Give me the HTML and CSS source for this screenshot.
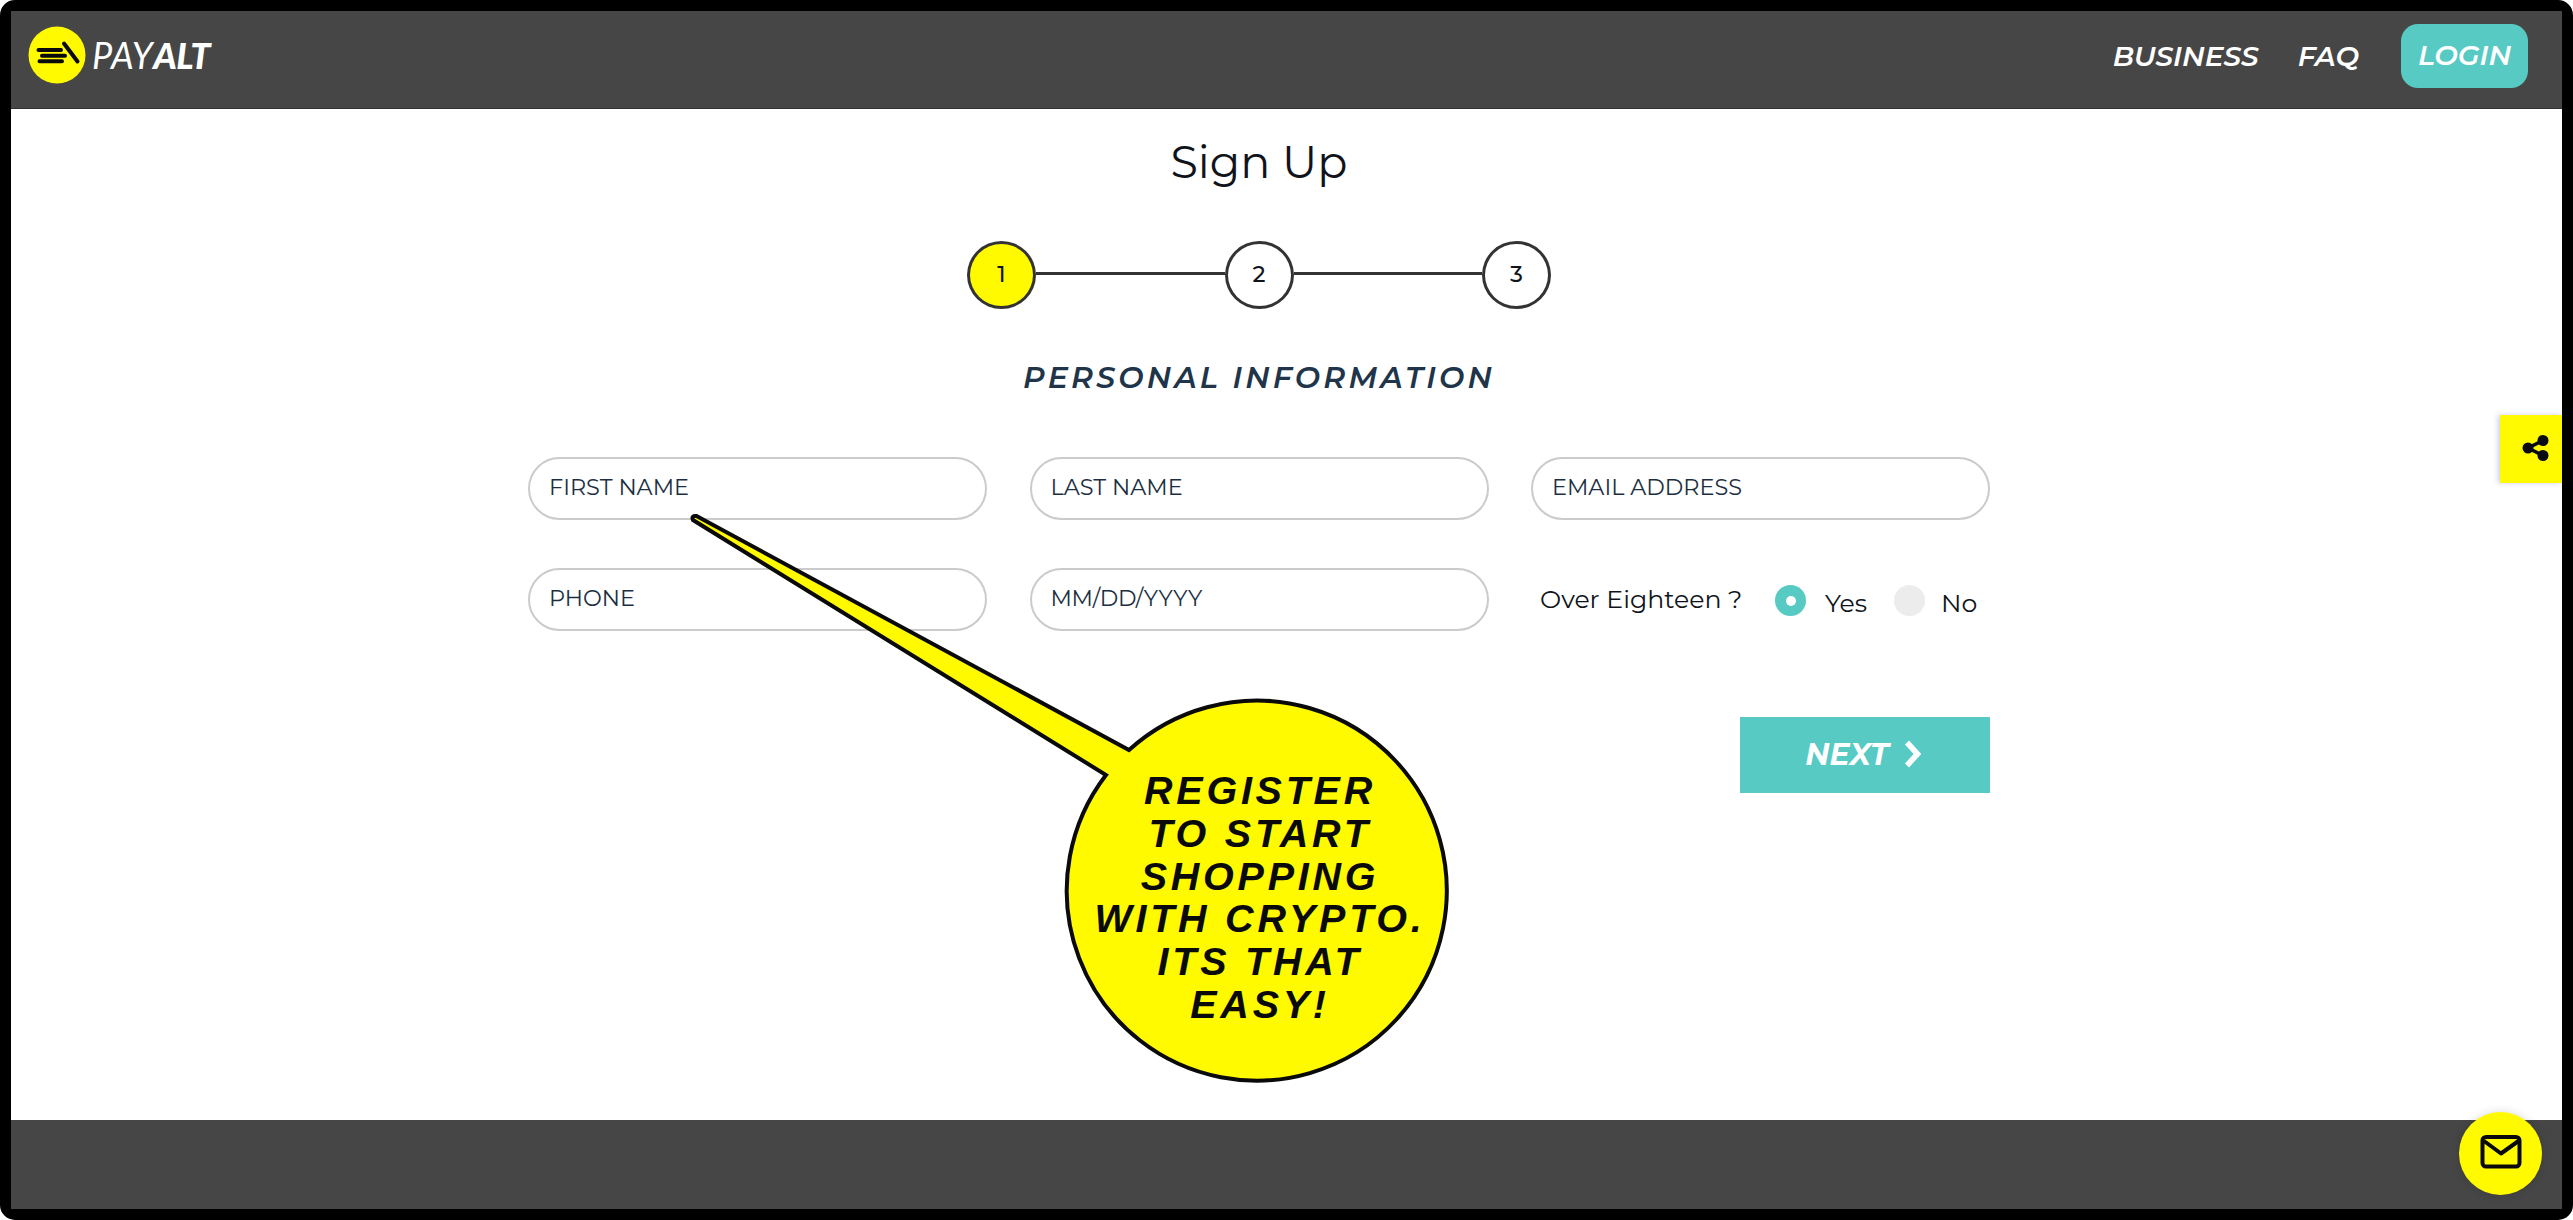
FILE: index.html
```html
<!DOCTYPE html>
<html lang="en">
<head>
<meta charset="utf-8">
<title>PayAlt - Sign Up</title>
<link rel="stylesheet" href="styles.css">
</head>
<body>
<div class="frame">
  <header class="header">
    <a class="brand">
      <svg class="brand-mark" viewBox="0 0 58 58" width="58" height="58">
        <circle cx="29" cy="29" r="28.5" fill="#fffa00"/>
        <g stroke="#0a0a0a" stroke-width="4" stroke-linecap="round">
          <path d="M10.500 24H33M14 29.800H37M11.500 35.300H34M36 17.500L49.500 35.500"/>
        </g>
      </svg>
      <span class="brand-name"><span class="brand-light">PAY</span><span class="brand-bold">ALT</span></span>
    </a>
    <nav class="nav">
      <a>BUSINESS</a>
      <a>FAQ</a>
      <a class="login">LOGIN</a>
    </nav>
  </header>

  <main class="main">
    <h1 class="title">Sign Up</h1>
    <div class="steps">
      <span class="step active">1</span>
      <span class="step-line"></span>
      <span class="step">2</span>
      <span class="step-line"></span>
      <span class="step">3</span>
    </div>
    <h2 class="subtitle">PERSONAL INFORMATION</h2>
    <div class="fields">
      <label class="field">FIRST NAME</label>
      <label class="field">LAST NAME</label>
      <label class="field">EMAIL ADDRESS</label>
      <label class="field">PHONE</label>
      <label class="field date">MM/DD/YYYY</label>
      <div class="age">
        <span class="question">Over Eighteen ?</span>
        <span class="radio checked"></span>
        <span class="option yes">Yes</span>
        <span class="radio"></span>
        <span class="option no">No</span>
      </div>
    </div>
    <button class="next">NEXT
      <svg viewBox="0 0 20 30" width="20" height="30"><path d="M4 3.500L14.500 15L4 26.500" fill="none" stroke="#fff" stroke-width="5.600"/></svg>
    </button>
  </main>

  <footer class="footer"></footer>
</div>

<div class="callout">
  <svg class="callout-shape" viewBox="680 500 780 590" width="780" height="590">
    <path d="M696.500 516L1129 750A190 190 0 1 1 1106 775L693 520Q691 515.500 696.500 516Z" fill="#fffa00" stroke="#0a0a0a" stroke-width="4"/>
  </svg>
  <p class="callout-text">REGISTER<br>TO START<br>SHOPPING<br>WITH CRYPTO.<br>ITS THAT<br>EASY!</p>
</div>

<a class="share">
  <svg viewBox="0 0 30 30" width="30" height="30">
    <path d="M22 7.500L7 15L22 22.500" fill="none" stroke="#0a0a14" stroke-width="3.400"/>
    <g fill="#0a0a14"><circle cx="22" cy="7.500" r="5.500"/><circle cx="7" cy="15" r="5.500"/><circle cx="22" cy="22.500" r="5.500"/></g>
  </svg>
</a>
<a class="mail">
  <svg viewBox="0 0 42 34" width="42" height="34">
    <g fill="none" stroke="#0a0a0a" stroke-width="4" stroke-linejoin="round">
      <rect x="2.500" y="2" width="37" height="29.500" rx="3.500"/>
      <path d="M4 6L21 18.500L38.500 6"/>
    </g>
  </svg>
</a>
</body>
</html>
```
FILE: styles.css
```css
* { box-sizing: border-box; }

html { background: #fff; }

body {
  margin: 0;
  position: relative;
  width: 2573px;
  height: 1220px;
  overflow: hidden;
  font-family: Montserrat, Inter, "Liberation Sans", sans-serif;
  color: #10141a;
}

.frame {
  display: flex;
  flex-direction: column;
  height: 1220px;
  border: 11px solid #000;
  border-radius: 15px;
  background: #fff;
}

.header {
  display: flex;
  justify-content: space-between;
  align-items: flex-start;
  height: 98px;
  padding: 13px 34px 0 17px;
  background: #464646;
  border-bottom: 1px solid #333;
}

.brand { display: flex; align-items: center; gap: 6px; margin-top: 2px; }
.brand-name { font-family: Lato, sans-serif; font-style: italic; font-size: 36px; line-height: 58px; color: #fff; }
.brand-light { font-weight: 400; letter-spacing: 0.5px; }
.brand-bold { font-weight: 900; letter-spacing: -0.6px; }

.nav {
  display: flex;
  align-items: center;
  font-size: 28px;
  font-style: italic;
  font-weight: 600;
  line-height: 62px;
  color: #fff;
}
.nav a + a { margin-left: 39px; }
.nav .login {
  width: 127px;
  height: 64px;
  margin-left: 42px;
  border-radius: 17px;
  background: #56cac3;
  text-align: center;
}

.main {
  flex: 1;
  display: flex;
  flex-direction: column;
  align-items: center;
  width: 1462px;
  margin-left: 517px;
}

.title {
  margin: 23px 0 0;
  font-size: 44.5px;
  font-weight: 400;
  line-height: 60px;
}

.steps { display: flex; align-items: center; margin-top: 49px; }
.step {
  width: 69px;
  height: 68px;
  border: 3px solid #333;
  border-radius: 50%;
  font-size: 22.5px;
  font-weight: 500;
  line-height: 60px;
  text-align: center;
}
.step.active { background: #fffa00; }
.step-line { width: 188.5px; height: 3px; margin-top: -3px; background: #333; }

.subtitle {
  margin: 49px 0 0;
  font-size: 30px;
  font-style: italic;
  font-weight: 600;
  line-height: 40px;
  letter-spacing: 3.2px;
  color: #20344a;
}

.fields {
  display: grid;
  grid-template-columns: repeat(3, 459px);
  gap: 48px 42.5px;
  margin-top: 59px;
}
.field {
  height: 63px;
  padding-left: 19px;
  border: 2px solid #cbcbcb;
  border-radius: 32px;
  font-size: 22.4px;
  line-height: 57px;
  color: #1c2f42;
}
.field.date { letter-spacing: -0.3px; }

.age { display: flex; align-items: center; height: 63px; padding: 2px 0 0 9px; font-size: 25.2px; line-height: 30px; }
.question { width: 235px; margin-top: -4px; white-space: nowrap; }
.radio {
  display: flex;
  align-items: center;
  justify-content: center;
  width: 31px;
  height: 31px;
  border-radius: 50%;
  background: #ececec;
}
.radio.checked { background: #56cac3; }
.radio.checked::after { content: ""; width: 10px; height: 10px; border-radius: 50%; background: #fff; }
.option { margin-top: 4px; }
.yes { width: 69px; margin-left: 19px; }
.no { margin-left: 16px; }

.next {
  display: flex;
  align-items: center;
  justify-content: center;
  gap: 14px;
  align-self: flex-end;
  width: 250px;
  height: 76px;
  margin-top: 86px;
  padding: 0 2px 2px 0;
  border: 0;
  background: #56cac3;
  color: #fff;
  font-family: inherit;
  font-size: 30px;
  font-style: italic;
  font-weight: 700;
}

.footer { height: 89px; background: #464646; }

/* Speech bubble pointing at the first form field */
.callout { position: absolute; left: 680px; top: 500px; width: 780px; height: 590px; }
.callout-shape { display: block; }
.callout-text {
  position: absolute;
  left: 385px;
  top: 269px;
  width: 390px;
  margin: 0;
  font: italic 700 39.5px/42.75px "Liberation Sans", Arial, sans-serif;
  letter-spacing: 3.75px;
  text-align: center;
  color: #0a0a0a;
}

.share {
  position: absolute;
  left: 2500px;
  top: 415px;
  width: 62px;
  height: 68px;
  padding: 18px 0 0 21px;
  background: #fffa00;
  box-shadow: -2px 0 5px rgba(60, 60, 160, 0.25);
  clip-path: inset(-8px 0 -8px -8px);
}

.mail {
  position: absolute;
  left: 2459px;
  top: 1112px;
  display: flex;
  align-items: center;
  justify-content: center;
  width: 83px;
  height: 83px;
  padding-bottom: 4px;
  border-radius: 50%;
  background: #fffa00;
  box-shadow: 0 0 10px rgba(0, 0, 0, 0.15);
}
```
